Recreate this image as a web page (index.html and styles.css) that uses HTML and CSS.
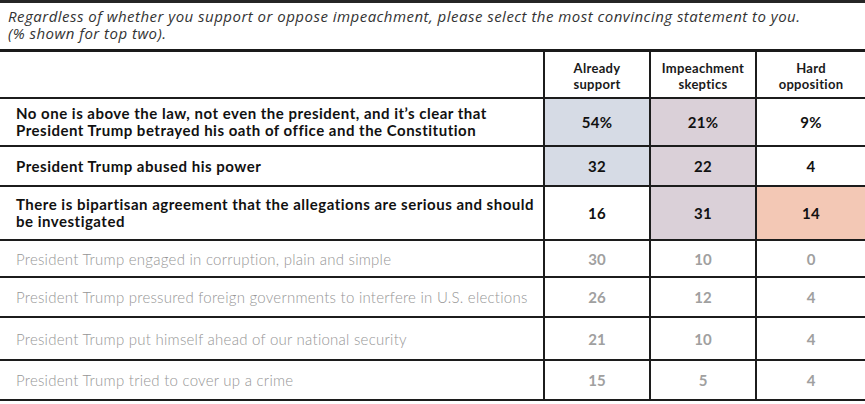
FILE: index.html
```html
<!DOCTYPE html>
<html>
<head>
<meta charset="utf-8">
<link rel="stylesheet" href="styles.css">
</head>
<body>
<div class="page">
  <div class="title">
    <p>Regardless of whether you support or oppose impeachment, please select the most convincing statement to you.</p>
    <p>(% shown for top two).</p>
  </div>
  <table class="grid">
    <thead>
      <tr class="head">
        <th class="label"></th>
        <th>Already<br>support</th>
        <th>Impeachment<br>skeptics</th>
        <th class="last">Hard<br>opposition</th>
      </tr>
    </thead>
    <tbody>
      <tr class="strong r1">
        <td class="label">No one is above the law, not even the president, and it’s clear that<br>President Trump betrayed his oath of office and the Constitution</td>
        <td class="blue">54%</td>
        <td class="mauve">21%</td>
        <td class="last">9%</td>
      </tr>
      <tr class="strong r2">
        <td class="label">President Trump abused his power</td>
        <td class="blue">32</td>
        <td class="mauve">22</td>
        <td class="last">4</td>
      </tr>
      <tr class="strong r3">
        <td class="label">There is bipartisan agreement that the allegations are serious and should<br>be investigated</td>
        <td>16</td>
        <td class="mauve">31</td>
        <td class="last peach">14</td>
      </tr>
      <tr class="dim r4">
        <td class="label">President Trump engaged in corruption, plain and simple</td>
        <td>30</td>
        <td>10</td>
        <td class="last">0</td>
      </tr>
      <tr class="dim r5">
        <td class="label">President Trump pressured foreign governments to interfere in U.S. elections</td>
        <td>26</td>
        <td>12</td>
        <td class="last">4</td>
      </tr>
      <tr class="dim r6">
        <td class="label">President Trump put himself ahead of our national security</td>
        <td>21</td>
        <td>10</td>
        <td class="last">4</td>
      </tr>
      <tr class="dim r7">
        <td class="label">President Trump tried to cover up a crime</td>
        <td>15</td>
        <td>5</td>
        <td class="last">4</td>
      </tr>
    </tbody>
  </table>
</div>
</body>
</html>
```

FILE: styles.css
```css
html, body {
  margin: 0;
  padding: 0;
  background: #ffffff;
}

.page {
  width: 865px;
  border-top: 3px solid #262626;
  font-family: Lato, "Open Sans", sans-serif;
  color: #111;
}

.title {
  padding: 5px 0 0 8px;
  height: 41px;
}

.title p {
  margin: 0;
  font-family: "Open Sans", Lato, sans-serif;
  font-style: italic;
  font-size: 15px;
  line-height: 17px;
  letter-spacing: 0.48px;
  color: #333;
}

.grid {
  width: 865px;
  border-collapse: collapse;
  table-layout: fixed;
  border-top: 3px solid #1a1a1a;
}

.grid th,
.grid td {
  border-bottom: 2px solid #1c1c1c;
  border-left: 2px solid #1c1c1c;
  padding: 0;
  text-align: center;
  vertical-align: middle;
}

.grid .label {
  border-left: none;
  text-align: left;
  padding-left: 16px;
  width: 527px;
}

.grid th:nth-child(2), .grid td:nth-child(2) { width: 104px; }
.grid th:nth-child(3), .grid td:nth-child(3) { width: 104px; }

.head th {
  height: 42px;
  padding-top: 3px;
  font-size: 13px;
  font-weight: 700;
  line-height: 16px;
  letter-spacing: 0.3px;
  color: #1a1a1a;
}

.strong td {
  font-weight: 700;
  font-size: 15px;
  line-height: 17px;
  color: #111;
}

.strong td.label {
  letter-spacing: 0.5px;
}

.strong td:not(.label) {
  font-size: 15px;
  letter-spacing: 0.3px;
}

.dim td.label {
  font-weight: 300;
  font-size: 15px;
  letter-spacing: 0.25px;
  color: #969696;
}

.dim td {
  font-weight: 700;
  font-size: 15px;
  color: #a0a0a0;
}

.r1 td { height: 46px; }
.r2 td { height: 38px; }
.r3 td { height: 52px; }
.r4 td { height: 35px; }
.r5 td { height: 38px; }
.r6 td { height: 41px; }
.r7 td { height: 38px; }

.blue { background: #d6dbe5; }
.mauve { background: #dad0d8; }
.peach { background: #f3c8b5; }
```
